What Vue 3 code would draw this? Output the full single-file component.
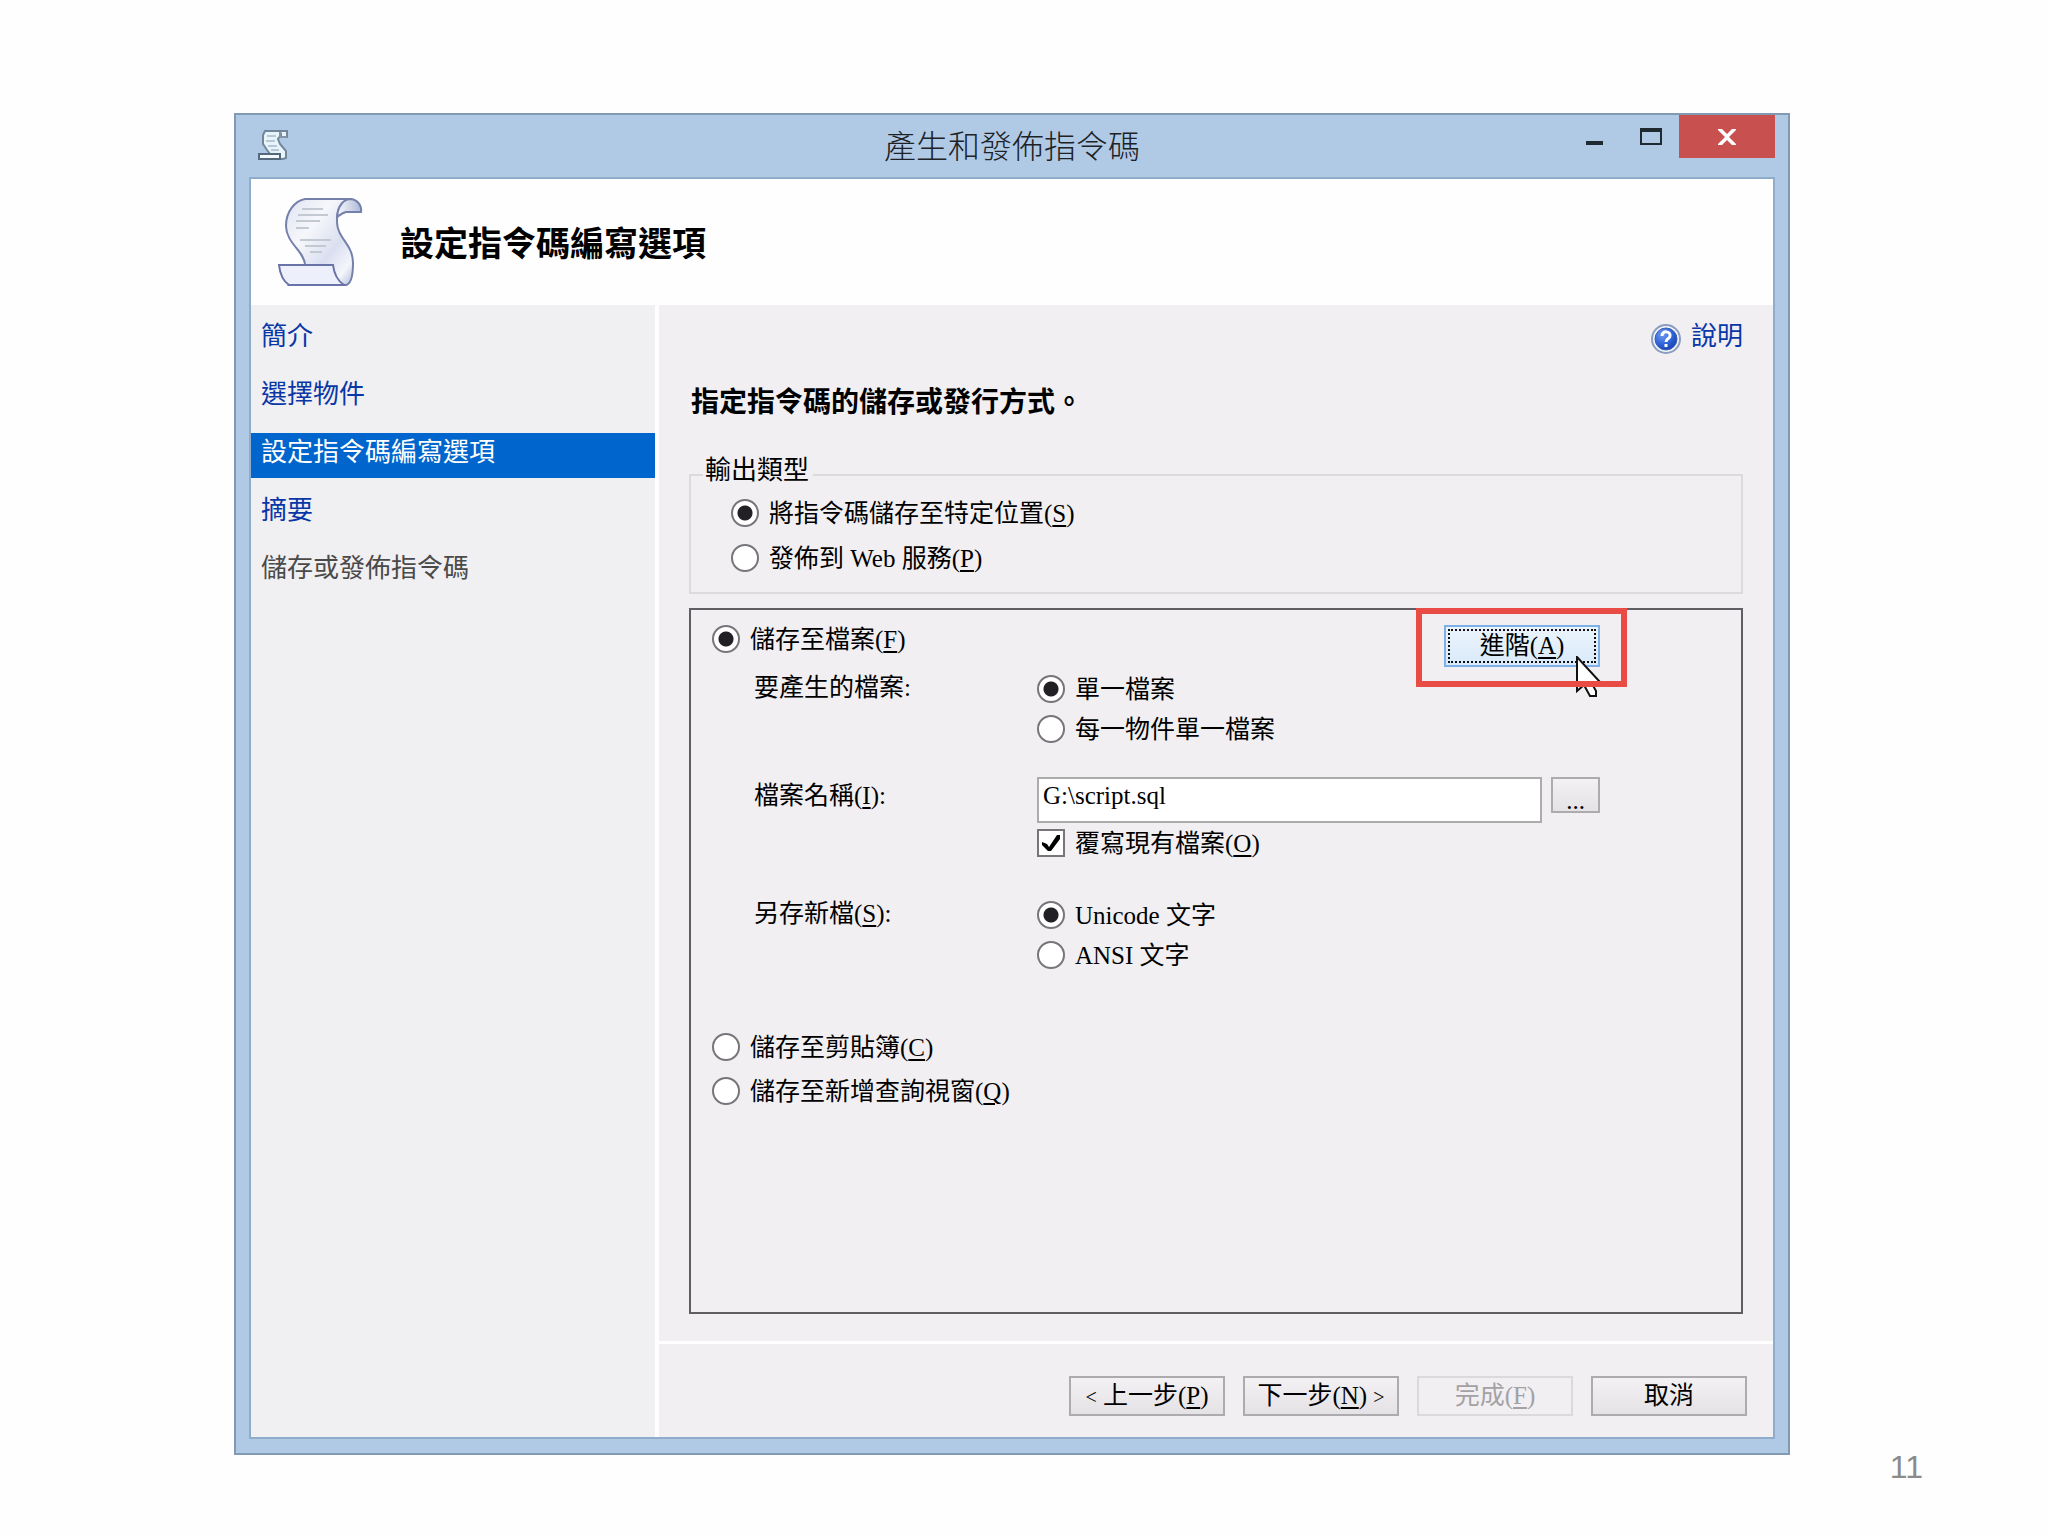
<script setup>
import { ref } from 'vue'

const steps = [
  { text: '簡介', state: 'link' },
  { text: '選擇物件', state: 'link' },
  { text: '設定指令碼編寫選項', state: 'current' },
  { text: '摘要', state: 'link' },
  { text: '儲存或發佈指令碼', state: 'disabled' }
]

const outputType = ref('location')
const target = ref('file')
const fileMode = ref('single')
const encoding = ref('unicode')
const fileName = ref('G:\\script.sql')
const overwrite = ref(true)
</script>

<template>
  <div class="page">
    <section class="window" aria-labelledby="window-title">
      <header class="titlebar">
        <svg class="titlebar-icon" viewBox="0 0 30 30" aria-hidden="true">
          <path d="M7 1H29V7H23V5L20 9L22 14L28 21V28L25 29H1V24H12L9 20L5 14V5Z" fill="#e9f3fa" stroke="#71869b" stroke-width="2" />
          <path d="M9 6H18M8 11H17M10 16H19M13 20H21" stroke="#b4c8d8" stroke-width="2" />
          <path d="M1 24H22V29H1Z" fill="#f4fbff" stroke="#526a7c" stroke-width="2" />
          <path d="M22 2V7H29" fill="none" stroke="#8195a6" stroke-width="2" />
        </svg>
        <h1 id="window-title">產生和發佈指令碼</h1>
        <div class="window-buttons">
          <button type="button" class="win-btn" aria-label="最小化">
            <svg width="18" height="30" viewBox="0 0 18 30"><path d="M0 24H17V28H0Z" fill="#1e2a30" /></svg>
          </button>
          <button type="button" class="win-btn max" aria-label="最大化">
            <svg width="22" height="30" viewBox="0 0 22 30"><path d="M1 12V27H21V12Z" fill="none" stroke="#1e2a30" stroke-width="2" /><path d="M0 11H22V15H0Z" fill="#1e2a30" /></svg>
          </button>
          <button type="button" class="win-btn close" aria-label="關閉">
            <svg width="18" height="16" viewBox="0 0 18 16"><path d="M0 0H4L9 5L14 0H18V1L11 8L18 15V16H14L9 11L4 16H0V15L7 8L0 1Z" fill="#fff" /></svg>
          </button>
        </div>
      </header>

      <div class="client">
        <div class="banner">
          <svg class="banner-icon" viewBox="0 0 86 90" aria-hidden="true">
            <defs>
              <linearGradient id="paper" x1="0" y1="0" x2="1" y2="1">
                <stop offset="0" stop-color="#dfe4f2" />
                <stop offset=".35" stop-color="#f6f7fb" />
                <stop offset=".65" stop-color="#dadff0" />
                <stop offset=".85" stop-color="#f5f6fc" />
                <stop offset="1" stop-color="#b0bbd8" />
              </linearGradient>
              <linearGradient id="curl" x1="0" y1="0" x2="1" y2="0">
                <stop offset="0" stop-color="#f7f8fc" />
                <stop offset="1" stop-color="#aebad8" />
              </linearGradient>
            </defs>
            <path d="M28 2H74C62 5 60 14 60 25C60 41 76 47 76 66C76 78 74 88 68 88H12L28 68C28 55 9 46 9 29C9 14 18 4 28 2Z" fill="url(#paper)" stroke="#7580ad" stroke-width="2" />
            <path d="M60 20C61 8 67 2 74 2C81 3 85 9 84 15H69C65 16 63 18 60 20Z" fill="url(#curl)" stroke="#7580ad" stroke-width="2" />
            <path d="M2 68H56C57 76 61 84 67 88H12C6 84 3 77 2 68Z" fill="#edf0fb" stroke="#6973aa" stroke-width="2" />
            <path d="M25 12H46M21 18H51M19 24H43M19 31H32M23 43H54M28 49H49M33 55H45" stroke="#c3c9d1" stroke-width="2" />
          </svg>
          <h2>設定指令碼編寫選項</h2>
        </div>

        <div class="body">
          <nav class="steps" aria-label="步驟">
            <ul>
              <li v-for="step in steps" :key="step.text" :class="step.state">
                <span v-if="step.state === 'disabled'">{{ step.text }}</span>
                <a v-else href="#" :aria-current="step.state === 'current' ? 'step' : undefined" @click.prevent>{{ step.text }}</a>
              </li>
            </ul>
          </nav>

          <main class="main">
            <form class="content" @submit.prevent>
              <a class="help" href="#" @click.prevent>
                <svg width="30" height="30" viewBox="0 0 30 30" aria-hidden="true">
                  <defs>
                    <radialGradient id="ball" cx=".35" cy=".3" r=".8">
                      <stop offset="0" stop-color="#6f9df2" />
                      <stop offset=".6" stop-color="#2a5fd6" />
                      <stop offset="1" stop-color="#1740a8" />
                    </radialGradient>
                  </defs>
                  <circle cx="15" cy="15" r="14" fill="#f2f5fb" stroke="#8a9cc0" stroke-width="2" />
                  <circle cx="15" cy="15" r="11" fill="url(#ball)" stroke="#3a5eb0" />
                  <path d="M11 12C11 6 20 7 19 12C19 15 15 14 15 18M15 20V23" fill="none" stroke="#fff" stroke-width="3" />
                </svg>
                <span>說明</span>
              </a>

              <h3>指定指令碼的儲存或發行方式。</h3>

              <fieldset class="output-type">
                <legend>輸出類型</legend>
                <label class="option"><input v-model="outputType" type="radio" name="output" value="location"><span>將指令碼儲存至特定位置(<u>S</u>)</span></label>
                <label class="option"><input v-model="outputType" type="radio" name="output" value="web"><span>發佈到 Web 服務(<u>P</u>)</span></label>
              </fieldset>

              <div class="panel">
                <div class="panel-top">
                  <label class="option"><input v-model="target" type="radio" name="target" value="file"><span>儲存至檔案(<u>F</u>)</span></label>
                  <div class="advanced-wrap">
                    <button type="button" class="btn advanced"><span>進階(<u>A</u>)</span></button>
                    <svg class="pointer" width="26" height="42" viewBox="0 0 26 42" aria-hidden="true">
                      <path d="M1 1V35L8 29L14 40H20V35L15 26H24Z" fill="#fff" stroke="#111" stroke-width="2" />
                    </svg>
                    <div class="highlight"></div>
                  </div>
                </div>

                <div class="settings">
                  <div id="files-label" class="caption">要產生的檔案:</div>
                  <div role="radiogroup" aria-labelledby="files-label">
                    <label class="option"><input v-model="fileMode" type="radio" name="files" value="single"><span>單一檔案</span></label>
                    <label class="option"><input v-model="fileMode" type="radio" name="files" value="each"><span>每一物件單一檔案</span></label>
                  </div>

                  <label class="caption" for="file-name">檔案名稱(<u>I</u>):</label>
                  <div class="file-cell">
                    <div class="file-row">
                      <input id="file-name" v-model="fileName" class="text-box" type="text">
                      <button type="button" class="btn browse" aria-label="瀏覽">...</button>
                    </div>
                    <label class="option"><input v-model="overwrite" type="checkbox"><span>覆寫現有檔案(<u>O</u>)</span></label>
                  </div>

                  <div id="encoding-label" class="caption">另存新檔(<u>S</u>):</div>
                  <div role="radiogroup" aria-labelledby="encoding-label">
                    <label class="option"><input v-model="encoding" type="radio" name="encoding" value="unicode"><span>Unicode 文字</span></label>
                    <label class="option"><input v-model="encoding" type="radio" name="encoding" value="ansi"><span>ANSI 文字</span></label>
                  </div>
                </div>

                <div class="other-targets">
                  <label class="option"><input v-model="target" type="radio" name="target" value="clipboard"><span>儲存至剪貼簿(<u>C</u>)</span></label>
                  <label class="option"><input v-model="target" type="radio" name="target" value="query"><span>儲存至新增查詢視窗(<u>Q</u>)</span></label>
                </div>
              </div>
            </form>

            <footer class="actions">
              <button type="button" class="btn"><span class="arrow">&lt;</span> 上一步(<u>P</u>)</button>
              <button type="button" class="btn">下一步(<u>N</u>) <span class="arrow">&gt;</span></button>
              <button type="button" class="btn" disabled>完成(<u>F</u>)</button>
              <button type="button" class="btn">取消</button>
            </footer>
          </main>
        </div>
      </div>
    </section>
    <div class="page-number">11</div>
  </div>
</template>

<style>
body {
  background: #fefefe;
}
</style>

<style scoped>
.page {
  box-sizing: border-box;
  padding: 113px 125px 0 234px;
  font-family: "Liberation Serif", "Noto Sans CJK TC", serif;
  font-size: 26px;
  color: #000;
}

.page * {
  box-sizing: border-box;
}

h1,
h2,
h3,
ul {
  margin: 0;
  padding: 0;
}

button,
input {
  margin: 0;
  font: inherit;
  color: inherit;
}

u {
  text-decoration-thickness: 2px;
  text-underline-offset: 3px;
}

.window {
  margin-right: 133px;
  padding: 0 13px 14px;
  background: #b0cae6;
  border: 2px solid #8299b4;
}

.titlebar {
  display: grid;
  grid-template-columns: 1fr auto 1fr;
  height: 62px;
}

.titlebar-icon {
  width: 30px;
  height: 30px;
  margin: 15px 0 0 9px;
}

.titlebar h1 {
  font-family: "Noto Sans CJK TC", sans-serif;
  font-size: 32px;
  font-weight: 300;
  line-height: 58px;
  color: #1c2226;
}

.window-buttons {
  display: flex;
  justify-content: flex-end;
}

.win-btn {
  display: flex;
  justify-content: center;
  width: 56px;
  height: 43px;
  padding: 2px 0;
  border: 0;
  background: none;
}

.win-btn.close {
  align-items: center;
  width: 96px;
  background: #c8504f;
}

.client {
  background: #fefefe;
  border: 2px solid #8facca;
}

.banner {
  display: flex;
  align-items: center;
  gap: 37px;
  height: 126px;
  padding-left: 26px;
}

.banner-icon {
  width: 86px;
  height: 90px;
}

.banner h2 {
  font-family: "Noto Sans CJK TC", sans-serif;
  font-size: 34px;
  font-weight: 700;
  line-height: 40px;
}

.body {
  display: flex;
  gap: 4px;
}

.steps {
  flex: none;
  width: 404px;
  padding-top: 12px;
  background: #f0eff1;
}

.steps ul {
  display: flex;
  flex-direction: column;
  gap: 13px;
  list-style: none;
}

.steps li {
  height: 45px;
  padding-left: 10px;
  line-height: 40px;
  color: #4a4a4a;
}

.steps a {
  color: #0a37a8;
  text-decoration: none;
}

.steps .current {
  background: #0065cc;
}

.steps .current a {
  color: #fff;
}

.main {
  flex: 1;
  min-width: 0;
  font-size: 25px;
  background: #f1eff2;
}

.content {
  display: flex;
  flex-direction: column;
  padding: 12px 30px 27px;
}

.help {
  display: flex;
  align-items: center;
  align-self: flex-end;
  gap: 10px;
  height: 40px;
  font-size: 26px;
  line-height: 38px;
  color: #0a37a8;
  text-decoration: none;
}

.help svg {
  margin-top: 4px;
}

h3 {
  margin-top: 23px;
  padding-left: 2px;
  font-family: "Noto Sans CJK TC", sans-serif;
  font-size: 28px;
  font-weight: 700;
  line-height: 40px;
}

.output-type {
  margin: 40px 0 0;
  padding: 0 0 12px 40px;
  border: 2px solid #dcdadd;
}

.output-type legend {
  margin-left: -28px;
  padding: 0 4px 8px 2px;
  font-size: 26px;
  line-height: 22px;
}

.option {
  display: flex;
  align-items: center;
  gap: 10px;
  width: fit-content;
  height: 40px;
  line-height: 28px;
  white-space: nowrap;
}

.option span {
  padding-top: 2px;
}

.output-type .option {
  height: 45px;
}

.option input {
  flex: none;
  width: 28px;
  height: 28px;
  appearance: none;
  background: #fff;
  border: 2px solid #77757a;
}

.option input[type="radio"] {
  border-radius: 50%;
}

.option input[type="radio"]:checked {
  background: radial-gradient(circle, #222024 7px, #fff 8px);
}

.option input[type="checkbox"]:checked {
  background: #fff url("data:image/svg+xml,%3Csvg xmlns='http://www.w3.org/2000/svg' viewBox='0 0 24 24'%3E%3Cpath d='M3 11L8 13L10 16L18 4H21V8L12 20H9L3 14Z' fill='%23000'/%3E%3C/svg%3E") center / 24px 24px no-repeat;
}

.panel {
  margin-top: 14px;
  padding: 15px 21px 199px;
  border: 2px solid #605e62;
}

.panel-top {
  display: flex;
  align-items: flex-start;
  justify-content: space-between;
  padding-right: 120px;
}

.panel-top .option {
  height: 28px;
}

.btn {
  height: 40px;
  padding: 0;
  line-height: 32px;
  white-space: nowrap;
  background: linear-gradient(#f3f1f4, #e4e2e5);
  border: 2px solid #adabae;
}

.btn:disabled {
  color: #a3a1a4;
  background: #f1eff2;
  border-color: #dbd9dc;
}

.advanced-wrap {
  position: relative;
  width: 156px;
}

.advanced {
  display: block;
  width: 100%;
  height: 42px;
  padding: 2px;
  background: linear-gradient(#ecf4fc, #d9eafa);
  border-color: #7cb0e6;
}

.advanced span {
  display: block;
  line-height: 30px;
  border: 2px dotted #111;
}

.highlight {
  position: absolute;
  inset: -17px -27px -20px -28px;
  border: 6px solid #e84c45;
  pointer-events: none;
}

.pointer {
  position: absolute;
  right: -2px;
  bottom: -31px;
}

.settings {
  display: grid;
  grid-template-columns: 283px 1fr;
  row-gap: 28px;
  margin: 2px 0 0 42px;
}

.caption {
  line-height: 38px;
}

.file-cell {
  padding-bottom: 4px;
}

.file-row {
  display: flex;
  gap: 9px;
  padding-right: 120px;
}

.text-box {
  flex: 1;
  min-width: 0;
  height: 46px;
  padding: 0 4px 8px;
  background: #fff;
  border: 2px solid #adabae;
  outline: 0;
}

.browse {
  width: 49px;
  height: 36px;
  padding-top: 6px;
}

.other-targets {
  margin-top: 50px;
}

.other-targets .option {
  height: 44px;
}

.actions {
  display: flex;
  justify-content: flex-end;
  gap: 18px;
  padding: 32px 26px 21px;
  border-top: 3px solid #fff;
}

.actions .btn {
  width: 156px;
}

.arrow {
  font-size: 20px;
}

.page-number {
  font-family: "Liberation Sans", sans-serif;
  font-size: 32px;
  line-height: 24px;
  text-align: right;
  color: #8b8b8b;
}
</style>
